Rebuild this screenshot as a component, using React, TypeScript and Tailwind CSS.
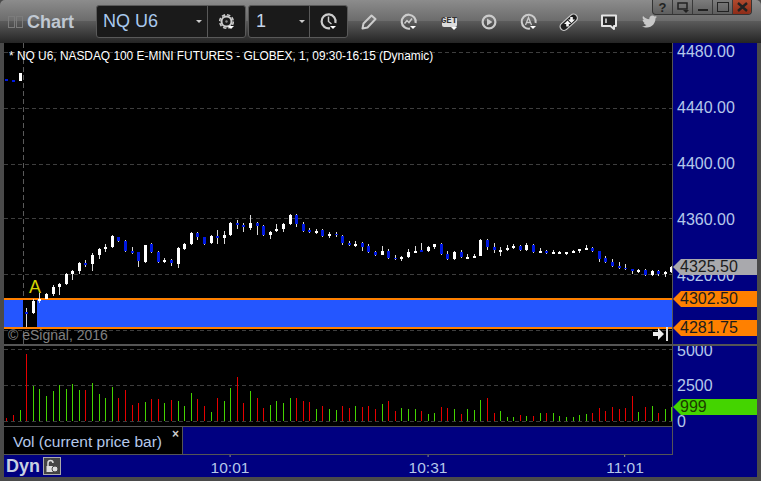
import { FaTwitter } from "react-icons/fa";

// candles: [x, up, wickTop, wickBottom, bodyTop, bodyBottom], read off a 3x grid, y measured from 200
const candles: number[][] = [
  [19, 0, -363, -357, -363, -357], [40, 0, -360, -354, -360, -354], [61, 1, -381, -357, -381, -357],
  [79, 0, 325, 380, 335, 343], [100, 1, 298, 342, 303, 338], [118, 1, 278, 310, 297, 302],
  [139, 1, 280, 298, 283, 296], [160, 1, 255, 287, 262, 281], [178, 1, 250, 285, 252, 260],
  [199, 1, 220, 254, 222, 252], [217, 1, 210, 240, 213, 222], [238, 1, 185, 222, 189, 213],
  [256, 0, 180, 200, 190, 195], [277, 1, 160, 212, 165, 191], [298, 1, 143, 178, 147, 164],
  [316, 1, 132, 155, 141, 147], [337, 1, 104, 144, 108, 141], [355, 0, 110, 125, 112, 122],
  [376, 0, 120, 156, 124, 153], [397, 0, 141, 162, 154, 159], [415, 0, 155, 200, 157, 182],
  [436, 1, 135, 188, 136, 186], [454, 0, 128, 160, 132, 156], [475, 0, 152, 188, 156, 185],
  [493, 1, 175, 190, 181, 186], [514, 0, 178, 197, 181, 189], [535, 1, 142, 203, 144, 191],
  [553, 1, 128, 150, 132, 147], [574, 1, 96, 136, 99, 132], [592, 0, 95, 120, 100, 111],
  [613, 0, 110, 135, 112, 131], [634, 1, 105, 132, 108, 129], [652, 0, 90, 131, 108, 114],
  [673, 1, 92, 132, 105, 114], [691, 1, 66, 108, 69, 105], [712, 0, 60, 87, 69, 75],
  [730, 0, 70, 95, 75, 82], [751, 1, 45, 90, 69, 83], [772, 0, 65, 105, 70, 77],
  [790, 0, 75, 107, 78, 105], [811, 1, 92, 117, 96, 105], [829, 1, 72, 95, 87, 93],
  [850, 1, 69, 95, 72, 87], [871, 1, 42, 75, 45, 72], [889, 0, 43, 80, 46, 71],
  [910, 0, 67, 96, 72, 93], [928, 0, 84, 100, 90, 95], [949, 1, 87, 102, 93, 98],
  [967, 0, 87, 110, 90, 107], [988, 1, 95, 113, 101, 107], [1009, 0, 95, 112, 101, 106],
  [1027, 0, 105, 135, 108, 130], [1048, 0, 122, 138, 130, 135], [1066, 1, 124, 141, 131, 137],
  [1087, 0, 125, 152, 128, 141], [1105, 0, 132, 160, 138, 155], [1126, 0, 153, 168, 156, 165],
  [1147, 1, 138, 165, 153, 164], [1165, 0, 147, 178, 154, 174], [1186, 0, 165, 180, 174, 178],
  [1204, 1, 167, 182, 170, 176], [1225, 1, 148, 175, 156, 170], [1246, 1, 138, 160, 153, 158],
  [1264, 0, 128, 156, 150, 155], [1285, 1, 137, 156, 141, 153], [1303, 1, 132, 147, 132, 140],
  [1324, 0, 128, 165, 131, 161], [1342, 0, 153, 180, 161, 177], [1363, 1, 152, 180, 156, 177],
  [1384, 0, 150, 175, 156, 171], [1402, 1, 162, 177, 171, 176], [1423, 1, 162, 175, 168, 173],
  [1441, 1, 117, 167, 120, 167], [1462, 0, 117, 150, 120, 140], [1483, 0, 128, 158, 141, 150],
  [1501, 1, 140, 167, 150, 155], [1522, 1, 135, 152, 143, 149], [1540, 1, 132, 148, 137, 143],
  [1561, 0, 135, 153, 138, 150], [1579, 1, 128, 153, 134, 149], [1600, 0, 132, 158, 135, 156],
  [1621, 1, 144, 159, 152, 158], [1639, 0, 150, 161, 153, 159], [1660, 1, 150, 162, 155, 161],
  [1678, 1, 152, 162, 155, 161], [1699, 1, 156, 164, 156, 161], [1720, 1, 150, 159, 153, 158],
  [1738, 1, 147, 159, 147, 153], [1759, 1, 135, 150, 144, 149], [1777, 0, 141, 156, 144, 153],
  [1798, 0, 153, 186, 154, 177], [1816, 0, 168, 188, 174, 186], [1837, 0, 178, 200, 186, 197],
  [1858, 0, 186, 208, 198, 204], [1876, 0, 192, 210, 204, 208], [1897, 0, 208, 222, 208, 214],
  [1915, 1, 207, 219, 210, 216], [1936, 0, 208, 228, 210, 226], [1957, 1, 210, 228, 212, 225],
  [1975, 0, 210, 228, 213, 222], [1996, 1, 212, 231, 216, 222], [2014, 1, 198, 218, 201, 216],
];

// volume bar tops on the same grid, y measured from 340. 1 = green, 0 = red
const volume: number[][] = [
  [234, 0], [225, 0], [210, 1], [42, 0], [138, 1], [148, 1], [168, 1], [153, 1], [135, 1], [147, 1], [132, 1],
  [150, 1], [150, 0], [129, 1], [162, 1], [174, 1], [141, 1], [174, 0], [150, 0], [195, 0], [189, 0], [186, 1],
  [177, 0], [177, 0], [189, 1], [180, 0], [183, 1], [198, 1], [159, 1], [177, 0], [198, 0], [216, 1], [174, 0],
  [183, 1], [144, 1], [111, 0], [189, 0], [153, 1], [174, 0], [204, 0], [195, 1], [183, 1], [189, 1], [174, 1],
  [174, 0], [183, 0], [186, 0], [207, 1], [198, 0], [207, 1], [210, 1], [198, 0], [204, 0], [198, 1], [201, 0],
  [198, 0], [207, 0], [192, 1], [183, 0], [213, 0], [204, 1], [207, 1], [207, 1], [213, 0], [222, 1], [219, 1],
  [201, 0], [204, 0], [207, 1], [222, 0], [207, 1], [210, 1], [180, 1], [174, 0], [219, 0], [213, 1], [231, 1],
  [231, 1], [225, 0], [228, 1], [228, 0], [219, 1], [219, 0], [219, 1], [228, 1], [231, 1], [231, 1], [225, 1],
  [222, 1], [219, 0], [204, 0], [213, 0], [201, 0], [207, 0], [204, 0], [168, 0], [216, 1], [201, 0], [198, 1],
  [219, 0], [207, 1], [201, 1],
];

const priceLabels = [
  { text: "4480.00", y: 52 },
  { text: "4440.00", y: 108 },
  { text: "4400.00", y: 164 },
  { text: "4360.00", y: 220 },
  { text: "4320.00", y: 276 },
];

const priceTags = [
  { text: "4325.50", y: 259, color: "bg-[#a9a9ad]" },
  { text: "4302.50", y: 291, color: "bg-[#ff8000]" },
  { text: "4281.75", y: 320, color: "bg-[#ff8000]" },
];

function Caret({ x, y }: { x: number; y: number }) {
  return <polygon points={`${x},${y} ${x + 6},${y} ${x + 3},${y + 3}`} fill="#fff" />;
}

function GearIcon() {
  return (
    <svg width="20" height="20" viewBox="0 0 20 20" fill="none">
      <circle cx="9.5" cy="9.5" r="5" stroke="#ccc" strokeWidth="2" />
      <circle cx="9.5" cy="9.5" r="6.8" stroke="#ccc" strokeWidth="1.6" strokeDasharray="3.4 2" />
      <circle cx="9.5" cy="9.5" r="1.2" fill="#888" />
      <Caret x={11} y={14} />
    </svg>
  );
}

function ClockIcon() {
  return (
    <svg width="20" height="20" viewBox="0 0 20 20" fill="none">
      <path d="M11 16.2A7 7 0 1 1 16.4 11" stroke="#ccc" strokeWidth="2.2" />
      <path d="M9.5 4.5V9.5L12.5 12" stroke="#ccc" strokeWidth="1.5" />
      <Caret x={11} y={14} />
    </svg>
  );
}

function PencilIcon() {
  return (
    <svg width="20" height="20" viewBox="0 0 20 20" fill="none">
      <path d="M3.5 16.5L4.5 11.5L12.5 3.5L16.5 7L8.5 15.5Z" stroke="#ccc" strokeWidth="2" strokeLinejoin="round" />
    </svg>
  );
}

function RefreshChartIcon() {
  return (
    <svg width="20" height="20" viewBox="0 0 20 20" fill="none">
      <path d="M11 16.6A7 7 0 1 1 16.6 11" stroke="#ccc" strokeWidth="2.2" />
      <path d="M5.5 11.5L8 8.5L10 10.5L13 6.5" stroke="#ccc" strokeWidth="1.5" />
      <Caret x={11} y={14} />
    </svg>
  );
}

function GetIcon() {
  return (
    <div className="relative flex h-[10px] w-[15px] items-center justify-center rounded-[2px] bg-[#ddd] font-['Liberation_Mono',monospace] text-[9px] leading-none font-bold text-[#333]">
      GET
      <svg width="6" height="3" viewBox="0 0 6 3" className="absolute top-[10px] left-[9px]">
        <polygon points="0,0 6,0 3,3" fill="#fff" />
      </svg>
    </div>
  );
}

function PlayIcon() {
  return (
    <svg width="20" height="20" viewBox="0 0 20 20" fill="none">
      <circle cx="10" cy="10" r="6.4" stroke="#ccc" strokeWidth="2.2" />
      <polygon points="8,6.5 13.5,10 8,13.5" fill="#ccc" />
    </svg>
  );
}

function AlertIcon() {
  return (
    <svg width="20" height="20" viewBox="0 0 20 20" fill="none">
      <path d="M11 16.6A7 7 0 1 1 16.6 11" stroke="#ccc" strokeWidth="2" />
      <path d="M6.5 13L9.5 5.5L12.5 13M7.5 10.5H11.5" stroke="#ccc" strokeWidth="1.3" />
      <Caret x={11} y={14} />
    </svg>
  );
}

function LinkIcon() {
  return (
    <svg width="20" height="20" viewBox="0 0 20 20" fill="none">
      <path d="M5 14.5L14.5 6" stroke="#c8c8c8" strokeWidth="9" strokeLinecap="round" />
      <path d="M5 14.5L14.5 6" stroke="#1c1c1c" strokeWidth="6.4" strokeLinecap="round" />
      <path d="M7.5 9L11 12.5H8.8V15H6.2V12.5H4Z" fill="#f4f4f4" transform="translate(1 -0.5)" />
      <path d="M12 11.5L8.5 8H10.7V5.5H13.3V8H15.5Z" fill="#f4f4f4" transform="translate(0.5 -0.5)" />
    </svg>
  );
}

function CommentIcon() {
  return (
    <svg width="20" height="20" viewBox="0 0 20 20" fill="none">
      <path d="M3 3.5H17V14H15V17L11.5 14H3Z" fill="#2a2a2a" stroke="#e4e4e4" strokeWidth="2" strokeLinejoin="round" />
      <path d="M7 6.5V11" stroke="#e4e4e4" strokeWidth="1.5" />
    </svg>
  );
}

function PriceChart() {
  return (
    <svg width="668" height="301" viewBox="4 43 668 301" className="block" shapeRendering="crispEdges">
      {[52, 108, 164, 218, 274, 330].map((y) => (
        <line key={y} x1="4" x2="672" y1={y + 0.5} y2={y + 0.5} stroke="#3e3e3e" strokeDasharray="4 3" />
      ))}
      <line x1="23.5" x2="23.5" y1="43" y2="344" stroke="#5a5a5a" strokeDasharray="5 3" />
      <rect x="4" y="300" width="668" height="27" fill="#2456ff" />
      <rect x="23" y="300" width="14" height="27" fill="#000" />
      <rect x="4" y="298" width="668" height="2" fill="#ff8000" />
      <rect x="4" y="327" width="668" height="2" fill="#ff8000" />
      {candles.map(([zx, up, wickTop, wickBottom, bodyTop, bodyBottom]) => {
        const x = Math.floor(zx / 3);
        return (
          <g key={zx}>
            <rect x={x} y={200 + wickTop / 3} width="1" height={(wickBottom - wickTop) / 3} fill="#d8d8d8" />
            <rect
              x={x - 1}
              y={200 + bodyTop / 3}
              width="3"
              height={Math.max(1, (bodyBottom - bodyTop) / 3)}
              fill={up ? "#fff" : "#0018e0"}
            />
          </g>
        );
      })}
    </svg>
  );
}

function VolumeChart() {
  return (
    <svg width="668" height="80" viewBox="4 346 668 80" className="block" shapeRendering="crispEdges">
      {[349, 385, 421].map((y) => (
        <line key={y} x1="4" x2="672" y1={y + 0.5} y2={y + 0.5} stroke="#3e3e3e" strokeDasharray="4 3" />
      ))}
      {volume.map(([top, up], i) => {
        const x = Math.floor(candles[i][0] / 3);
        const y = 340 + top / 3;
        return <rect key={i} x={x} y={y} width="1" height={421 - y} fill={up ? "#44d400" : "#e60000"} />;
      })}
    </svg>
  );
}

export default function App() {
  return (
    <div className="relative flex h-[481px] w-[761px] flex-col overflow-hidden bg-[#4a4a4a] font-['Liberation_Sans',Arial,sans-serif]">
      {/* title bar */}
      <div className="relative flex h-[43px] shrink-0 items-center rounded-t-[5px] bg-[linear-gradient(#8c8c8c,#6c6c6c_48%,#5a5a5a_50%,#242424)] pl-2">
        <div className="flex gap-px">
          <div className="h-3 w-[7px] border border-[#7c7c7c]" />
          <div className="h-3 w-[7px] border border-[#7c7c7c]" />
        </div>
        <div className="ml-1 w-[69px] text-[18px] leading-none font-bold text-[#c0c8d2]">Chart</div>

        <div className="flex h-[33px] w-[150px] rounded-[3px] border border-[#595959] bg-[#1a1a1a]">
          <div className="relative flex w-[111px] items-center border-r border-[#595959] pl-[6px] text-[18px] text-[#a9c9ee]">
            NQ U6
            <svg width="6" height="3" viewBox="0 0 6 3" className="absolute top-[14px] left-[99px]">
              <polygon points="0,0 6,0 3,3" fill="#ccc" />
            </svg>
          </div>
          <div className="flex flex-1 items-center justify-center">
            <GearIcon />
          </div>
        </div>
        <div className="ml-[2px] flex h-[33px] w-[100px] rounded-[3px] border border-[#595959] bg-[#1a1a1a]">
          <div className="relative flex w-[61px] items-center border-r border-[#595959] pl-[7px] text-[18px] text-[#c4d4ea]">
            1
            <svg width="6" height="3" viewBox="0 0 6 3" className="absolute top-[14px] left-[50px]">
              <polygon points="0,0 6,0 3,3" fill="#ccc" />
            </svg>
          </div>
          <div className="flex flex-1 items-center justify-center">
            <ClockIcon />
          </div>
        </div>

        <div className="ml-px flex items-center">
          {[
            <PencilIcon key="pencil" />,
            <RefreshChartIcon key="refresh" />,
            <GetIcon key="get" />,
            <PlayIcon key="play" />,
            <AlertIcon key="alert" />,
            <LinkIcon key="link" />,
            <CommentIcon key="comment" />,
            <FaTwitter key="twitter" className="size-[15px] text-[#c8c8c8]" />,
          ].map((icon, i) => (
            <div key={i} className="flex h-[24px] w-10 items-center justify-center">
              {icon}
            </div>
          ))}
        </div>

        {/* window buttons */}
        <div className="absolute top-0 left-[652px] flex h-[15px] w-[100px] overflow-hidden rounded-b-[4px] border border-t-0 border-[#333] bg-[linear-gradient(#7c7c7c,#5e5e5e)] text-[#222]">
          <div className="flex w-5 items-center justify-center border-r border-[#3a3a3a] text-[13px] leading-none font-bold">?</div>
          <div className="flex w-5 items-center justify-center border-r border-[#3a3a3a]">
            <svg width="12" height="11" viewBox="0 0 12 11" fill="none">
              <path d="M1 1H10V7H1Z" stroke="#222" strokeWidth="1.5" />
              <polygon points="6,8 12,8 9,11" fill="#222" />
            </svg>
          </div>
          <div className="flex w-5 items-end justify-center border-r border-[#3a3a3a] pb-[3px]">
            <div className="h-[2px] w-[10px] bg-[#222]" />
          </div>
          <div className="flex w-5 items-center justify-center border-r border-[#3a3a3a]">
            <div className="h-[10px] w-3 border border-[#222]" />
          </div>
          <div className="flex flex-1 items-center justify-center bg-[linear-gradient(#b04a2e,#8e2c18)]">
            <svg width="11" height="10" viewBox="0 0 11 10" fill="none">
              <path d="M1 1L10 9M10 1L1 9" stroke="#222" strokeWidth="2.4" />
            </svg>
          </div>
        </div>
      </div>

      <div className="flex flex-1 flex-col px-1 pb-1">
        {/* price pane */}
        <div className="flex h-[301px] shrink-0">
          <div className="relative w-[668px] shrink-0 bg-black">
            <PriceChart />
            <div className="absolute top-[6px] left-[5px] text-[11.9px] leading-[14px] whitespace-nowrap text-white">
              * NQ U6, NASDAQ 100 E-MINI FUTURES - GLOBEX, 1, 09:30-16:15 (Dynamic)
            </div>
            <div className="absolute top-[235px] left-[25px] text-[18px] leading-none text-[#d4d400]">A</div>
            <div className="absolute top-[284px] left-1 text-[14px] leading-4 text-[#808080]">© eSignal, 2016</div>
            <svg width="16" height="14" viewBox="0 0 16 14" className="absolute top-[284px] left-[649px]">
              <path d="M0 5H5V1L11 7L5 13V9H0Z" fill="#eee" />
              <rect x="13" y="0" width="2" height="14" fill="#ddd" />
            </svg>
          </div>
          <div className="relative flex-1 border-l border-[#555] bg-[#000080]">
            {priceLabels.map((label) => (
              <div
                key={label.text}
                className="absolute left-1 text-[16px] leading-none text-[#b5c8ea]"
                style={{ top: label.y - 43 - 8 }}
              >
                {label.text}
              </div>
            ))}
            {priceTags.map((tag) => (
              <div
                key={tag.text}
                className={`absolute left-0 h-4 w-[84px] pl-[7px] text-[16px] leading-4 text-[#1c1c1c] [clip-path:polygon(0_50%,8px_0,100%_0,100%_100%,8px_100%)] ${tag.color}`}
                style={{ top: tag.y - 43 }}
              >
                {tag.text}
              </div>
            ))}
          </div>
        </div>

        <div className="h-[2px] shrink-0 bg-[#555]" />

        {/* volume pane */}
        <div className="flex h-[81px] shrink-0">
          <div className="w-[668px] shrink-0 border-b border-[#555] bg-black">
            <VolumeChart />
          </div>
          <div className="relative flex-1 overflow-hidden border-l border-[#555] bg-[#000080]">
            <div className="absolute top-[-3px] left-1 text-[16px] leading-none text-[#b5c8ea]">5000</div>
            <div className="absolute top-[32px] left-1 text-[16px] leading-none text-[#b5c8ea]">2500</div>
            <div className="absolute top-[68px] left-1 text-[16px] leading-none text-[#b5c8ea]">0</div>
            <div className="absolute top-[53px] left-0 h-4 w-[84px] bg-[#44d400] pl-[7px] text-[16px] leading-4 text-[#1c3c00] [clip-path:polygon(0_50%,8px_0,100%_0,100%_100%,8px_100%)]">
              999
            </div>
          </div>
        </div>

        {/* study tab */}
        <div className="flex h-[28px] shrink-0 bg-[#000080]">
          <div className="flex w-[668px] shrink-0 border-b border-[#555]">
            <div className="relative flex w-[179px] items-center border-r border-[#555] bg-black pt-[2px] pl-[9px] text-[15.5px] whitespace-nowrap text-[#b5c8ea]">
              Vol (current price bar)
              <span className="absolute top-0 right-[3px] text-[12px] leading-[14px] font-bold text-[#ccc]">×</span>
            </div>
          </div>
          <div className="flex-1 border-l border-[#555]" />
        </div>

        {/* time axis */}
        <div className="relative flex flex-1 items-center bg-[#000080] pl-[2px]">
          <div className="text-[18px] leading-none font-bold text-[#c8d0e0]">Dyn</div>
          <div className="ml-[3px] flex size-[18px] items-center justify-center border border-[#aaa] bg-[#444]">
            <svg width="14" height="14" viewBox="0 0 14 14" fill="none">
              <path d="M3 7V4a2.5 2.5 0 0 1 5 0" stroke="#ddd" strokeWidth="1.5" />
              <rect x="1.5" y="7" width="7" height="6" fill="#ddd" />
              <circle cx="10" cy="10" r="3" fill="#ddd" stroke="#444" />
            </svg>
          </div>
          {[
            { text: "10:01", x: 226 },
            { text: "10:31", x: 424 },
            { text: "11:01", x: 621 },
          ].map((tick) => (
            <div key={tick.text} className="absolute top-0 -translate-x-1/2 text-center" style={{ left: tick.x }}>
              <div className="mx-auto h-[2px] w-px bg-[#888]" />
              <div className="mt-[3px] text-[15.5px] leading-4 text-[#b5c8ea]">{tick.text}</div>
            </div>
          ))}
        </div>
      </div>
    </div>
  );
}
